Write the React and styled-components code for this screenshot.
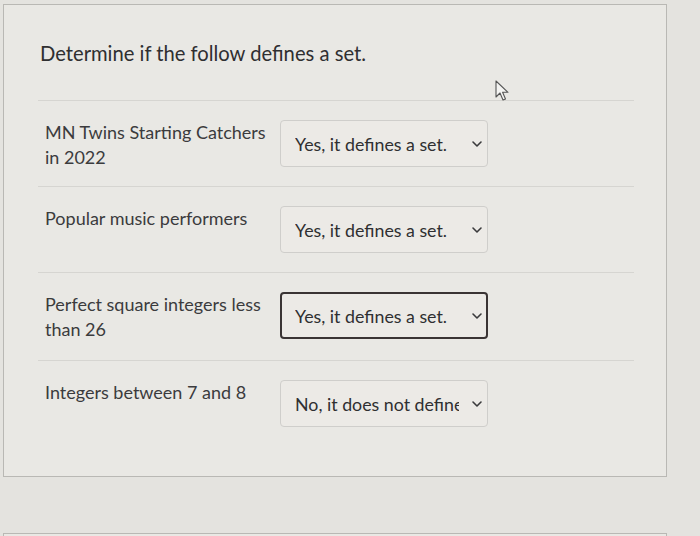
import React from "react";
import styled, { createGlobalStyle } from "styled-components";

const Global = createGlobalStyle`
  html, body { margin: 0; padding: 0; background: #e4e3df; }
  body { font-family: Lato, "Open Sans", sans-serif; color: #3b3b3d; }
  #root { width: 700px; height: 536px; overflow: hidden; }
`;

const Page = styled.div`
  width: 700px;
  height: 536px;
  padding: 4px 33px 0 3px;
  box-sizing: border-box;
  display: flex;
  flex-direction: column;
  gap: 56px;
  position: relative;
`;

const Card = styled.section`
  flex: 0 0 473px;
  background: #e9e8e4;
  border: 1px solid #b9b8b4;
  box-sizing: border-box;
  padding: 34px 32px 0 34px;
`;

const NextCard = styled.div`
  flex: 0 0 40px;
  background: #e9e8e4;
  border: 1px solid #b9b8b4;
`;

const Title = styled.h2`
  margin: 0 0 33px 2px;
  font-family: Lato, sans-serif;
  font-weight: 400;
  font-size: 20.2px;
  line-height: 28px;
  color: #2f2f31;
`;

const List = styled.div`
  display: flex;
  flex-direction: column;
`;

const Row = styled.div`
  display: grid;
  grid-template-columns: 235px 208px;
  align-items: start;
  border-top: 1px solid #d6d5d1;
  padding: 19px 0 16px 7px;
  min-height: ${(p) => (p.$tall ? 88 : 86)}px;
  box-sizing: border-box;
`;

const Label = styled.div`
  font-size: 18px;
  line-height: 25px;
  color: #3b3b3d;
`;

const SelectWrap = styled.div`
  position: relative;
  height: 47px;
`;

const Select = styled.select`
  appearance: none;
  -webkit-appearance: none;
  width: 100%;
  height: 100%;
  box-sizing: border-box;
  font-family: Lato, sans-serif;
  font-size: 17.8px;
  color: #2f2f31;
  background: #eceae6;
  border: ${(p) => (p.$focused ? "2px solid #3a3434" : "1px solid #cfcecb")};
  border-radius: 4px;
  padding: 0 28px 0 ${(p) => (p.$focused ? "13px" : "14px")};
  outline: none;
`;

const Chevron = styled.svg`
  position: absolute;
  right: 5px;
  top: 50%;
  margin-top: -4px;
  width: 12px;
  height: 8px;
  pointer-events: none;
`;

const Cursor = styled.svg`
  position: absolute;
  left: 494px;
  top: 80px;
  width: 18px;
  height: 23px;
`;

const rows = [
  { label: "MN Twins Starting Catchers in 2022", value: "Yes, it defines a set." },
  { label: "Popular music performers", value: "Yes, it defines a set." },
  { label: "Perfect square integers less than 26", value: "Yes, it defines a set.", focused: true, tall: true },
  { label: "Integers between 7 and 8", value: "No, it does not define a set." },
];

function Dropdown({ value, focused }) {
  return (
    <SelectWrap>
      <Select $focused={focused} defaultValue={value}>
        <option>[ Choose ]</option>
        <option>Yes, it defines a set.</option>
        <option>No, it does not define a set.</option>
      </Select>
      <Chevron viewBox="0 0 12 8">
        <path d="M2 2 L6 6 L10 2" fill="none" stroke="#3a3a3c" strokeWidth="1.6" strokeLinecap="round" strokeLinejoin="round" />
      </Chevron>
    </SelectWrap>
  );
}

export default function App() {
  return (
    <>
      <Global />
      <Page>
        <Card>
          <Title>Determine if the follow defines a set.</Title>
          <List>
            {rows.map((r) => (
              <Row key={r.label} $tall={r.tall}>
                <Label>{r.label}</Label>
                <Dropdown value={r.value} focused={r.focused} />
              </Row>
            ))}
          </List>
        </Card>
        <NextCard />
        <Cursor viewBox="0 0 18 23">
          <path d="M2 1 L2 17 L6 13 L9 20 L11.5 19 L8.6 12.3 L14 12.3 Z" fill="#f4f4f2" stroke="#555" strokeWidth="1.1" strokeLinejoin="round" />
        </Cursor>
      </Page>
    </>
  );
}
